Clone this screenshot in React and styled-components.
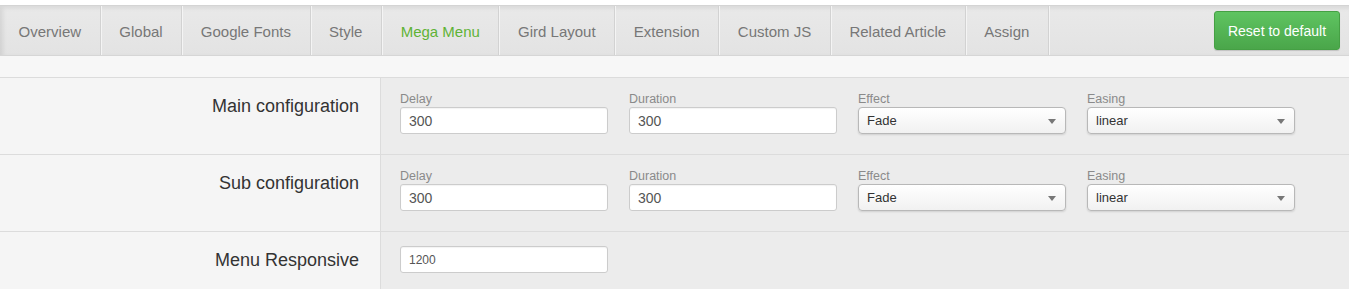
import React from "react";
import styled, { createGlobalStyle } from "styled-components";

const GlobalStyle = createGlobalStyle`
  body {
    margin: 0;
    background: #fff;
    font-family: "Liberation Sans", Arial, sans-serif;
  }
`;

const tabs = [
  "Overview",
  "Global",
  "Google Fonts",
  "Style",
  "Mega Menu",
  "Gird Layout",
  "Extension",
  "Custom JS",
  "Related Article",
  "Assign",
];

const rows = [
  {
    label: "Main configuration",
    fields: [
      { name: "Delay", value: "300" },
      { name: "Duration", value: "300" },
      { name: "Effect", value: "Fade", select: true },
      { name: "Easing", value: "linear", select: true },
    ],
  },
  {
    label: "Sub configuration",
    fields: [
      { name: "Delay", value: "300" },
      { name: "Duration", value: "300" },
      { name: "Effect", value: "Fade", select: true },
      { name: "Easing", value: "linear", select: true },
    ],
  },
  {
    label: "Menu Responsive",
    fields: [{ value: "1200", small: true }],
  },
];

const App = () => {
  return (
    <>
      <GlobalStyle />
      <Wrapper>
        <TabBar>
          <TabList>
            {tabs.map((t) => (
              <Tab key={t} $active={t === "Mega Menu"}>
                {t}
              </Tab>
            ))}
          </TabList>
          <ResetButton>Reset to default</ResetButton>
        </TabBar>
        <Spacer />
        <Table>
          {rows.map((row) => (
            <Row key={row.label} $tall={!!row.fields[0].name}>
              <Label>{row.label}</Label>
              <Fields>
                {row.fields.map((f, i) => (
                  <Field key={i}>
                    {f.name && <FieldName>{f.name}</FieldName>}
                    {f.select ? (
                      <Select>
                        {f.value}
                        <Caret />
                      </Select>
                    ) : (
                      <Input $small={f.small}>{f.value}</Input>
                    )}
                  </Field>
                ))}
              </Fields>
            </Row>
          ))}
        </Table>
      </Wrapper>
    </>
  );
};

export default App;

const Wrapper = styled.div`
  padding-top: 5px;
  width: 100%;
`;

const TabBar = styled.div`
  display: flex;
  align-items: center;
  justify-content: space-between;
  height: 49px;
  background: linear-gradient(#e9e9e9, #e3e3e3);
  border-top: 1px solid #d4d4d4;
  border-bottom: 1px solid #d6d6d6;
  box-shadow: inset 3px 2px 4px rgba(0, 0, 0, 0.08);
`;

const TabList = styled.div`
  display: flex;
  height: 100%;
`;

const Tab = styled.div`
  display: flex;
  align-items: center;
  padding: 1px 18.6px 0;
  font-size: 15px;
  color: ${(p) => (p.$active ? "#5fb336" : "#777")};
  border-right: 1px solid #d2d2d2;
  box-shadow: 1px 0 0 #f4f4f4;
`;

const ResetButton = styled.button`
  margin-right: 9px;
  height: 39px;
  width: 126px;
  border: 1px solid #45a044;
  border-radius: 3px;
  background: linear-gradient(#5fc461, #4aa64a);
  color: #fff;
  font-family: "Liberation Sans", Arial, sans-serif;
  font-size: 14px;
  box-shadow: 0 1px 1px rgba(0, 0, 0, 0.15);
`;

const Spacer = styled.div`
  height: 21px;
  background: #f7f7f7;
  border-bottom: 1px solid #dcdcdc;
`;

const Table = styled.div`
  display: flex;
  flex-direction: column;
`;

const Row = styled.div`
  display: grid;
  grid-template-columns: 381px 1fr;
  height: ${(p) => (p.$tall ? "76px" : "57px")};
  border-bottom: 1px solid #dcdcdc;
  &:last-child {
    border-bottom: none;
  }
`;

const Label = styled.div`
  background: #f5f5f5;
  border-right: 1px solid #dcdcdc;
  text-align: right;
  padding: 17px 21px 0 0;
  line-height: 22px;
  font-size: 18px;
  color: #333;
`;

const Fields = styled.div`
  background: #ececec;
  display: flex;
  align-items: flex-start;
  gap: 21px;
  padding: 14px 0 0 19px;
`;

const Field = styled.div`
  display: flex;
  flex-direction: column;
  width: 208px;
`;

const FieldName = styled.div`
  font-size: 12.5px;
  color: #8a8a8a;
  line-height: 14px;
  margin-bottom: 1px;
`;

const Input = styled.div`
  box-sizing: border-box;
  height: 27px;
  background: #fff;
  border: 1px solid #ccc;
  border-radius: 3px;
  padding-left: 8px;
  display: flex;
  align-items: center;
  font-size: ${(p) => (p.$small ? "12px" : "14px")};
  color: #555;
  box-shadow: inset 0 1px 1px rgba(0, 0, 0, 0.05);
`;

const Select = styled.div`
  position: relative;
  box-sizing: border-box;
  height: 27px;
  background: linear-gradient(#ffffff, #f1f1f1);
  border: 1px solid #b8b8b8;
  border-radius: 4px;
  padding-left: 8px;
  display: flex;
  align-items: center;
  font-size: 13px;
  color: #333;
  box-shadow: 0 1px 2px rgba(0, 0, 0, 0.12);
`;

const Caret = styled.span`
  position: absolute;
  right: 9px;
  top: 11px;
  width: 0;
  height: 0;
  border-left: 4px solid transparent;
  border-right: 4px solid transparent;
  border-top: 5px solid #777;
`;
